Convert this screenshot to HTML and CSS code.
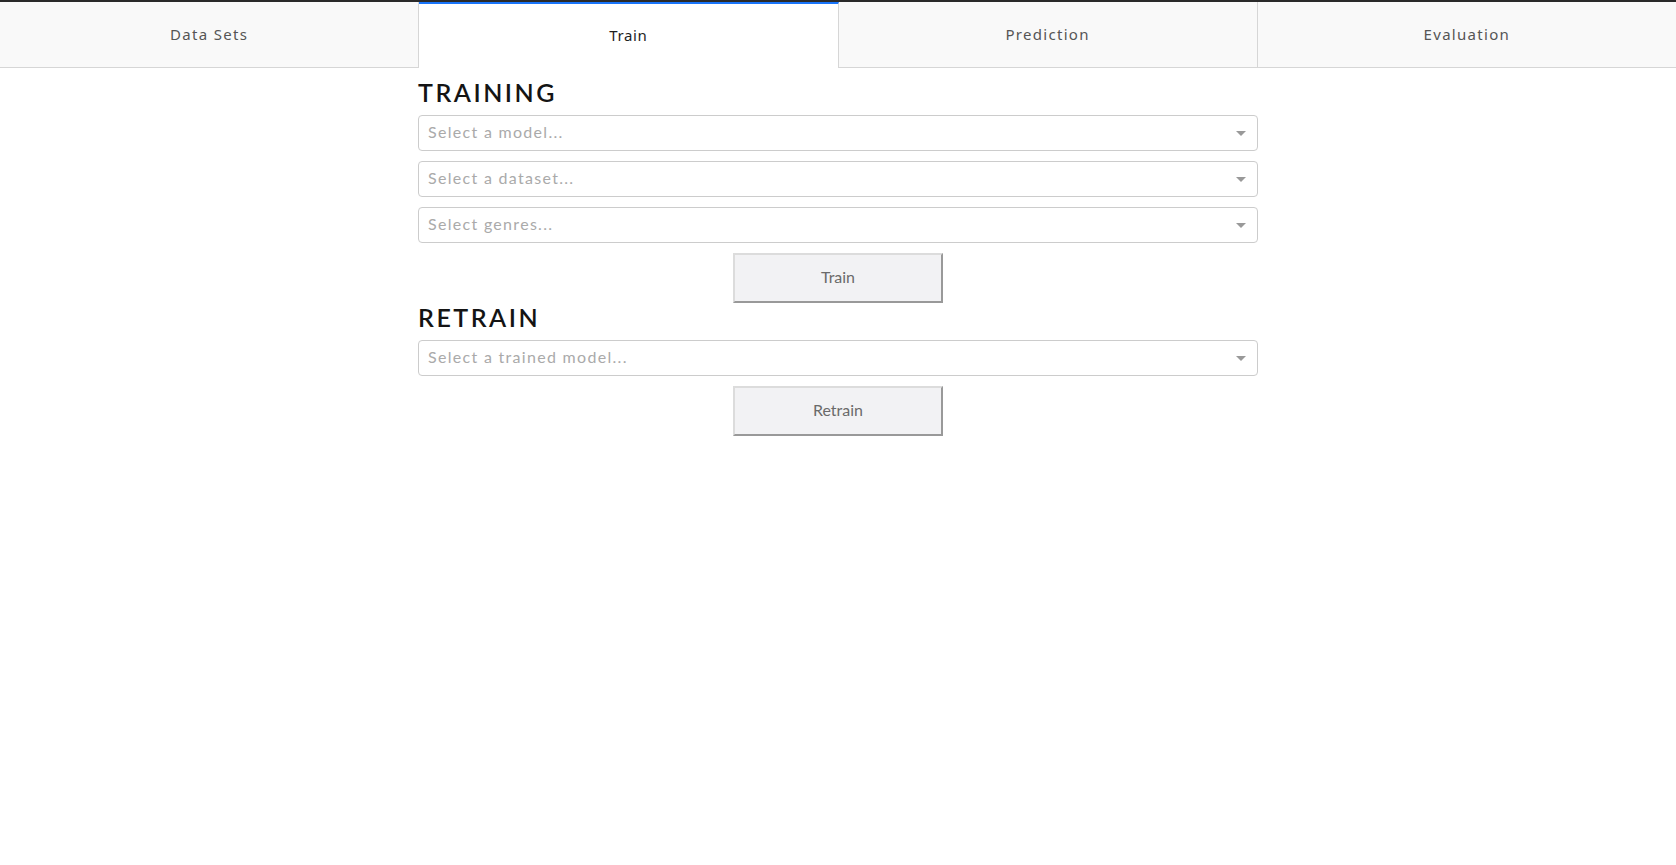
FILE: index.html
```html
<!DOCTYPE html>
<html lang="en">
<head>
<meta charset="utf-8">
<title>Training</title>
<link rel="stylesheet" href="styles.css">
</head>
<body>
<div class="app">
  <nav class="tabs">
    <div class="tab">Data Sets</div>
    <div class="tab tab--selected">Train</div>
    <div class="tab">Prediction</div>
    <div class="tab">Evaluation</div>
  </nav>
  <main class="content">
    <section class="section">
      <h2 class="section-title">TRAINING</h2>
      <div class="fields">
        <div class="dropdown"><span class="placeholder">Select a model...</span><span class="arrow"></span></div>
        <div class="dropdown"><span class="placeholder">Select a dataset...</span><span class="arrow"></span></div>
        <div class="dropdown"><span class="placeholder">Select genres...</span><span class="arrow"></span></div>
        <button class="action">Train</button>
      </div>
    </section>
    <section class="section">
      <h2 class="section-title">RETRAIN</h2>
      <div class="fields">
        <div class="dropdown"><span class="placeholder">Select a trained model...</span><span class="arrow"></span></div>
        <button class="action">Retrain</button>
      </div>
    </section>
  </main>
</div>
</body>
</html>
```

FILE: styles.css
```css
html, body {
  margin: 0;
  padding: 0;
  background: #ffffff;
}

body {
  font-family: "Lato", "Noto Sans", sans-serif;
  border-top: 2px solid #2a2a2a;
}

.tabs {
  display: flex;
  height: 66px;
}

.tab {
  flex: 1 1 0;
  display: flex;
  align-items: center;
  justify-content: center;
  background: #f9f9f9;
  border-right: 1px solid #d6d6d6;
  border-bottom: 1px solid #d6d6d6;
  padding-bottom: 2px;
  font-family: "Noto Sans", sans-serif;
  font-size: 15px;
  letter-spacing: 1.3px;
  color: #555555;
  box-sizing: border-box;
}

.tab:last-child {
  border-right: none;
}

.tab--selected {
  background: #ffffff;
  border-top: 2px solid #1975fa;
  border-bottom: none;
  color: #1e1e1e;
  letter-spacing: 0.6px;
}

.content {
  width: 840px;
  margin: 0 auto;
  padding-top: 12px;
}

.section + .section {
  padding-top: 2px;
}

.section-title {
  margin: 0 0 10px;
  font-family: "Lato", sans-serif;
  font-size: 25px;
  line-height: 25px;
  font-weight: 600;
  letter-spacing: 2.5px;
  color: #141414;
}

.fields {
  display: flex;
  flex-direction: column;
  gap: 10px;
}

.dropdown {
  height: 36px;
  box-sizing: border-box;
  border: 1px solid #cccccc;
  border-radius: 4px;
  display: flex;
  align-items: center;
  justify-content: space-between;
  padding: 0 11px 3px 9px;
  background: #ffffff;
}

.arrow {
  width: 0;
  height: 0;
  margin-top: 3px;
  border-top: 5px solid #999999;
  border-left: 5px solid transparent;
  border-right: 5px solid transparent;
}

.placeholder {
  font-family: "Lato", sans-serif;
  font-size: 16px;
  letter-spacing: 1.3px;
  color: #aaaaaa;
}

.action {
  align-self: center;
  width: 210px;
  height: 50px;
  box-sizing: border-box;
  background: #f2f2f4;
  border: 2px solid;
  border-color: #dcdcdc #999999 #999999 #dcdcdc;
  font-family: "Lato", sans-serif;
  font-size: 16px;
  color: #6a6a6a;
  padding: 0 0 3px;
}
```
